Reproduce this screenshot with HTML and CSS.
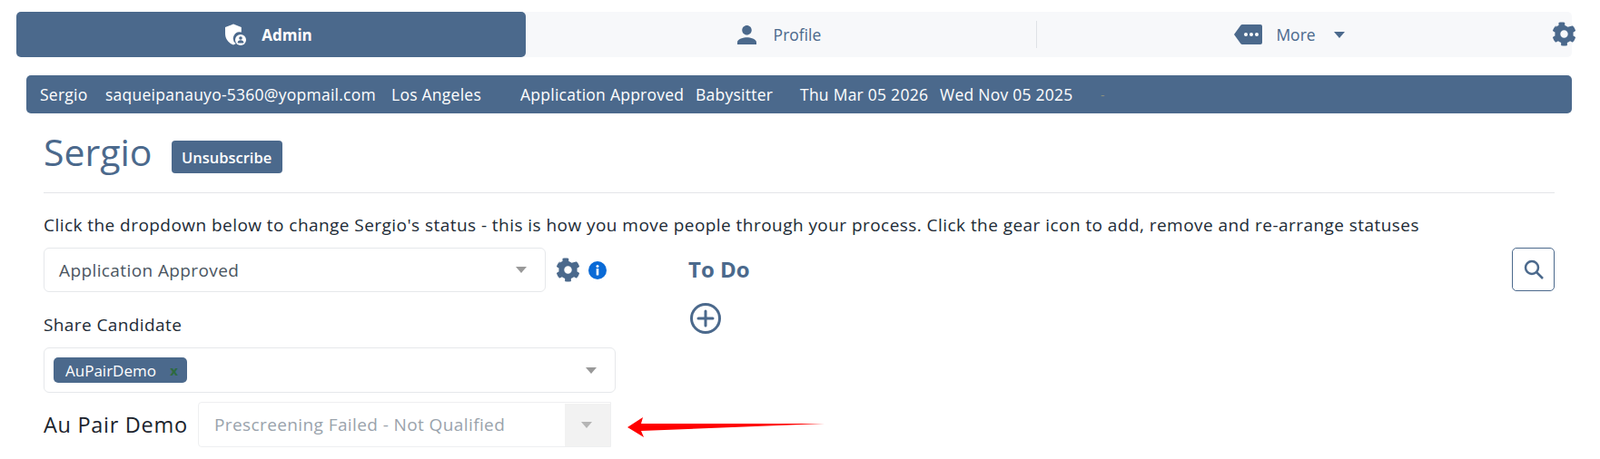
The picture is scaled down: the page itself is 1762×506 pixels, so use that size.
FILE: index.html
```html
<!DOCTYPE html>
<html lang="en">
<head>
<meta charset="utf-8">
<title>Sergio</title>
<link rel="stylesheet" href="styles.css">
</head>
<body>
<svg class="defs" width="0" height="0" aria-hidden="true">
  <symbol id="gear" viewBox="0 0 512 512"><path d="M487.4 315.7l-42.6-24.6c4.3-23.2 4.3-47 0-70.2l42.6-24.6c4.9-2.8 7.1-8.6 5.5-14-11.1-35.6-30-67.8-54.7-94.6-3.8-4.1-10-5.1-14.8-2.3L330.8 110c-17.9-15.4-38.5-27.3-60.8-35.1V25.8c0-5.6-3.9-10.5-9.4-11.7-36.7-8.2-74.3-7.8-109.2 0-5.5 1.2-9.4 6.1-9.4 11.7V75c-22.2 7.9-42.8 19.8-60.8 35.1L88.7 85.5c-4.9-2.8-11-1.9-14.8 2.3-24.7 26.7-43.6 58.9-54.7 94.6-1.7 5.4.6 11.2 5.5 14L67.3 221c-4.3 23.2-4.3 47 0 70.2l-42.6 24.6c-4.9 2.8-7.1 8.6-5.5 14 11.1 35.6 30 67.8 54.7 94.6 3.8 4.1 10 5.1 14.8 2.3l42.6-24.6c17.9 15.4 38.5 27.3 60.8 35.1v49.2c0 5.6 3.9 10.5 9.4 11.7 36.7 8.2 74.3 7.8 109.2 0 5.5-1.2 9.4-6.1 9.4-11.7v-49.2c22.2-7.9 42.8-19.8 60.8-35.1l42.6 24.6c4.9 2.8 11 1.9 14.8-2.3 24.7-26.7 43.6-58.9 54.7-94.6 1.5-5.5-.7-11.3-5.6-14.1zM256 336c-44.1 0-80-35.9-80-80s35.9-80 80-80 80 35.9 80 80-35.9 80-80 80z"/></symbol>
</svg>

<nav class="tabs">
  <a class="tab tab-admin">
    <svg class="ic-shield" viewBox="0 0 24 24"><path class="fill-white" d="M10 0.5 1 4v7c0 6 3.8 10.6 9 12.5 1-.4 2-.9 2.8-1.5a7 7 0 0 1 6-12.4V4z"/><circle class="fill-white" cx="18" cy="18" r="6"/><circle class="fill-blue" cx="18" cy="16" r="1.8"/><path class="fill-blue" d="M14.6 21.5c0-2 1.5-3.2 3.4-3.2s3.4 1.2 3.4 3.2z"/></svg>
    <span>Admin</span>
  </a>
  <a class="tab tab-profile">
    <svg class="ic-person" viewBox="4 4 16 16"><path d="M12 12c2.21 0 4-1.79 4-4s-1.79-4-4-4-4 1.79-4 4 1.79 4 4 4zm0 2c-2.67 0-8 1.34-8 4v2h16v-2c0-2.66-5.33-4-8-4z"/></svg>
    <span>Profile</span>
  </a>
  <a class="tab tab-more">
    <svg class="ic-tag" viewBox="0 0 31 22"><path d="M9 0h20a2 2 0 0 1 2 2v18a2 2 0 0 1-2 2H9a2 2 0 0 1-1.6-.8L0 11 7.400.8A2 2 0 0 1 9 0z"/><circle class="fill-white" cx="13" cy="11" r="2"/><circle class="fill-white" cx="19" cy="11" r="2"/><circle class="fill-white" cx="25" cy="11" r="2"/></svg>
    <span>More</span>
    <i class="caret caret-nav"></i>
  </a>
  <svg class="ic-gear nav-gear"><use href="#gear"/></svg>
</nav>

<div class="infobar">
  <span>Sergio</span>
  <span>saqueipanauyo-5360@yopmail.com</span>
  <span>Los Angeles</span>
  <span>Application Approved</span>
  <span>Babysitter</span>
  <span>Thu Mar 05 2026</span>
  <span>Wed Nov 05 2025</span>
  <span class="faint">-</span>
</div>

<main class="content">
  <header class="title-row">
    <h1>Sergio</h1>
    <button class="btn-unsub">Unsubscribe</button>
  </header>
  <p class="hint">Click the dropdown below to change Sergio's status - this is how you move people through your process. Click the gear icon to add, remove and re-arrange statuses</p>

  <div class="columns">
    <div class="left">
      <div class="status-row">
        <div class="select select-status"><span>Application Approved</span><i class="caret"></i></div>
        <svg class="ic-gear"><use href="#gear"/></svg>
        <svg class="ic-info" viewBox="0 0 20 20"><circle cx="10" cy="10" r="10"/><circle class="fill-white" cx="10" cy="5.400" r="1.500"/><rect class="fill-white" x="8.700" y="8" width="2.600" height="7.500" rx=".6"/></svg>
      </div>
      <label class="share-label">Share Candidate</label>
      <div class="select select-share">
        <span class="chip">AuPairDemo<b class="chip-x">x</b></span>
        <i class="caret"></i>
      </div>
      <div class="demo-row">
        <span class="demo-label">Au Pair Demo</span>
        <div class="select select-disabled">
          <span>Prescreening Failed - Not Qualified</span>
          <span class="disabled-arrow"><i class="caret"></i></span>
        </div>
      </div>
    </div>

    <div class="todo">
      <h2>To Do</h2>
      <svg class="ic-plus" viewBox="0 0 34 34"><circle cx="17" cy="17" r="15.500"/><path d="M17 9v16M9 17h16"/></svg>
    </div>

    <button class="btn-search"><svg viewBox="0 0 22 22"><circle cx="9" cy="9" r="7"/><path d="M14 14l7 7"/></svg></button>
  </div>
</main>

<svg class="annot-arrow" viewBox="0 0 217 22"><path d="M0 11 17 0 15 7 217 7 15 15 18 22z"/></svg>
</body>
</html>
```
FILE: styles.css
```css
* { box-sizing: border-box; }

html, body { margin: 0; padding: 0; }

body {
  position: relative;
  width: 1762px;
  height: 506px;
  overflow: hidden;
  background: #fff;
  color: #1f2a36;
  font-family: "Open Sans", "Noto Sans", sans-serif;
  font-size: 18px;
  padding-top: 13px;
}

.defs { position: absolute; }

.fill-white { fill: #fff; }
.fill-blue { fill: #4b698c; }

/* top tabs */
.tabs {
  position: relative;
  display: flex;
  width: 1713px;
  height: 50px;
  margin-left: 18px;
  background: #f7f8fa;
  border-radius: 5px;
}

.tab {
  display: flex;
  align-items: center;
  justify-content: center;
  color: #4b698c;
  font-size: 17.500px;
}

.tab-admin {
  width: 561px;
  padding-right: 6px;
  background: #4b698c;
  border-radius: 5px;
  color: #fff;
  font-size: 17px;
  font-weight: 700;
  gap: 17px;
}

.tab-profile { width: 562px; gap: 19px; padding-right: 4px; }

.tab-more {
  position: relative;
  flex: 1;
  gap: 15px;
  padding-right: 32px;
}

.tab-more::before {
  content: "";
  position: absolute;
  left: 0;
  top: 10px;
  bottom: 10px;
  width: 1px;
  background: #dfe2e6;
}

.ic-shield { width: 24px; height: 24px; }
.ic-person { width: 21px; height: 21px; fill: #4b698c; }
.ic-tag { width: 31px; height: 22px; fill: #4b698c; }

.caret {
  display: block;
  width: 0;
  height: 0;
  border-left: 6px solid transparent;
  border-right: 6px solid transparent;
  border-top: 7px solid #999;
}

.caret-nav { border-top-color: #4b698c; margin-left: 5px; }

.ic-gear { width: 27px; height: 27px; fill: #4b698c; flex: none; }

.nav-gear { position: absolute; right: -5px; top: 11px; }

/* info bar */
.infobar {
  display: grid;
  grid-template-columns: 72px 315px 142px 193px 115px 154px 177px auto;
  align-items: center;
  width: 1702px;
  height: 42px;
  margin: 20px 0 0 29px;
  padding-left: 15px;
  background: #4b698c;
  border-radius: 5px;
  color: #fff;
  font-size: 17.500px;
  letter-spacing: 0.25px;
  white-space: nowrap;
}

.faint { color: #8a8f7f; font-size: 14px; }

/* content */
.content {
  width: 1664px;
  margin-left: 48px;
}

.title-row {
  display: flex;
  align-items: center;
  gap: 21px;
  height: 67px;
  margin-top: 21px;
  padding-bottom: 12px;
  border-bottom: 1px solid #e3e5e8;
}

h1 {
  margin: 0 0 12px;
  color: #4b698c;
  font-size: 41px;
  font-weight: 400;
  line-height: 48px;
}

.btn-unsub {
  width: 122px;
  height: 36px;
  padding: 0;
  border: 0;
  border-radius: 4px;
  background: #4b698c;
  color: #fff;
  font: 600 16.500px "Open Sans", sans-serif;
}

.hint {
  margin: 23px 0 0;
  color: #212b36;
  font-size: 19px;
  letter-spacing: 0.45px;
  line-height: 24px;
  white-space: nowrap;
}

.columns {
  display: flex;
  align-items: flex-start;
  margin-top: 13px;
}

.left { width: 710px; }

.status-row {
  display: flex;
  align-items: center;
  gap: 9px;
  height: 49px;
}

.select {
  display: flex;
  align-items: center;
  justify-content: space-between;
  background: #fff;
  border: 1px solid #e6e8eb;
  border-radius: 6px;
  color: #4a5560;
  font-size: 19px;
  letter-spacing: 0.4px;
  white-space: nowrap;
}

.select-status {
  width: 553px;
  height: 49px;
  padding: 0 20px 0 16px;
  margin-right: 2px;
}

.ic-info { width: 20px; height: 20px; fill: #0a6ad6; }

.share-label {
  display: block;
  margin-top: 23px;
  height: 38px;
  font-size: 19px;
  letter-spacing: 0.4px;
  line-height: 26px;
  color: #212b36;
}

.select-share {
  width: 630px;
  height: 50px;
  padding: 0 20px 0 10px;
}

.chip {
  display: flex;
  align-items: center;
  justify-content: space-between;
  width: 147px;
  height: 28px;
  padding: 0 10px 0 13px;
  background: #4b698c;
  border-radius: 5px;
  color: #fff;
  font-size: 17px;
  letter-spacing: 0;
}

.chip-x { color: #2d6a3f; font-size: 15px; }

.demo-row {
  display: flex;
  align-items: center;
  gap: 10px;
  margin-top: 10px;
}

.demo-label {
  width: 160px;
  font-size: 23.500px;
  letter-spacing: 0.7px;
  color: #1b232c;
  white-space: nowrap;
}

.select-disabled {
  width: 455px;
  height: 50px;
  padding-left: 17px;
  border-color: #eeeff1;
  border-radius: 4px 0 0 4px;
  color: #9aa3ac;
}

.disabled-arrow {
  display: flex;
  align-items: center;
  justify-content: center;
  align-self: stretch;
  width: 50px;
  margin-top: 1px;
  padding-right: 2px;
  background: #f2f2f2;
}

.disabled-arrow .caret { border-top-color: #b5b5b5; }

.todo { width: 907px; padding-top: 8px; }

.todo h2 {
  margin: 0;
  color: #4b698c;
  font-size: 24px;
  font-weight: 700;
  line-height: 32px;
}

.ic-plus {
  display: block;
  width: 34px;
  height: 34px;
  margin: 21px 0 0 2px;
  fill: none;
  stroke: #4b698c;
  stroke-width: 3;
  stroke-linecap: round;
}

.btn-search {
  width: 47px;
  height: 48px;
  padding: 0;
  display: flex;
  align-items: center;
  justify-content: center;
  background: #fff;
  border: 1.500px solid #4b698c;
  border-radius: 5px;
}

.btn-search svg {
  width: 22px;
  height: 22px;
  fill: none;
  stroke: #4b698c;
  stroke-width: 2.500;
}

/* annotation painted over the page */
.annot-arrow {
  position: absolute;
  left: 691px;
  top: 460px;
  width: 217px;
  height: 22px;
  fill: #f00;
}
```
